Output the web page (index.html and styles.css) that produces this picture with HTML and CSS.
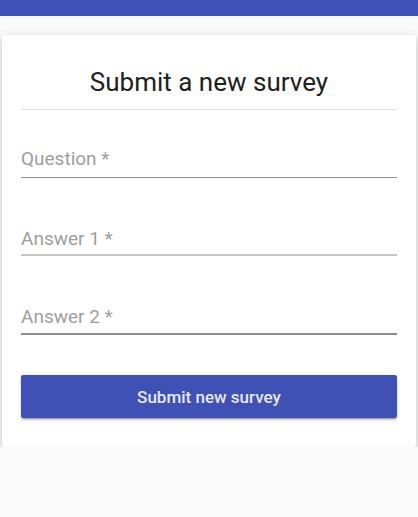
FILE: index.html
```html
<!DOCTYPE html>
<html>
<head>
<meta charset="utf-8">
<link rel="stylesheet" href="styles.css">
</head>
<body>
<div class="topbar"></div>
<div class="card">
  <h1 class="title">Submit a new survey</h1>
  <div class="divider"></div>
  <div class="field field-q"><span class="label">Question *</span></div>
  <div class="field field-a1"><span class="label">Answer 1 *</span></div>
  <div class="field field-a2"><span class="label">Answer 2 *</span></div>
  <button class="submit">Submit new survey</button>
</div>
</body>
</html>
```
FILE: styles.css
```css
html, body {
  margin: 0;
  padding: 0;
  background: #fafafa;
  font-family: Roboto, "Noto Sans", sans-serif;
}
.topbar {
  height: 16px;
  background: #3f51b5;
}
.card {
  margin: 19px 2px 0;
  background: #fff;
  padding: 31px 19px 29px;
  box-shadow: 0 3px 3px -2px rgba(0,0,0,0.2), 0 3px 4px 0 rgba(0,0,0,0.14), 0 1px 8px 0 rgba(0,0,0,0.12);
  border-radius: 2px;
}
.title {
  margin: 0;
  font-size: 26px;
  line-height: 32px;
  font-weight: 400;
  text-align: center;
  color: #212121;
}
.divider {
  margin-top: 11px;
  height: 1px;
  background: #e0e0e0;
}
.field {
  font-size: 19px;
  line-height: 24px;
  color: #9e9e9e;
}
.field-q {
  margin-top: 37px;
  padding-bottom: 6px;
  border-bottom: 1px solid #8f8f8f;
}
.field-a1 {
  margin-top: 49px;
  padding-bottom: 3px;
  border-bottom: 2px solid #c6c6c6;
}
.field-a2 {
  margin-top: 49px;
  padding-bottom: 4px;
  border-bottom: 2px solid #8e8e8e;
}
.submit {
  display: block;
  width: 100%;
  margin-top: 40px;
  height: 43px;
  border: none;
  border-radius: 2px;
  background: #3f51b5;
  color: #e6e8f5;
  font-family: Roboto, "Noto Sans", sans-serif;
  font-size: 17px;
  font-weight: 500;
  box-shadow: 0 3px 1px -2px rgba(0,0,0,0.2), 0 2px 2px 0 rgba(0,0,0,0.14), 0 1px 5px 0 rgba(0,0,0,0.12);
}
```
